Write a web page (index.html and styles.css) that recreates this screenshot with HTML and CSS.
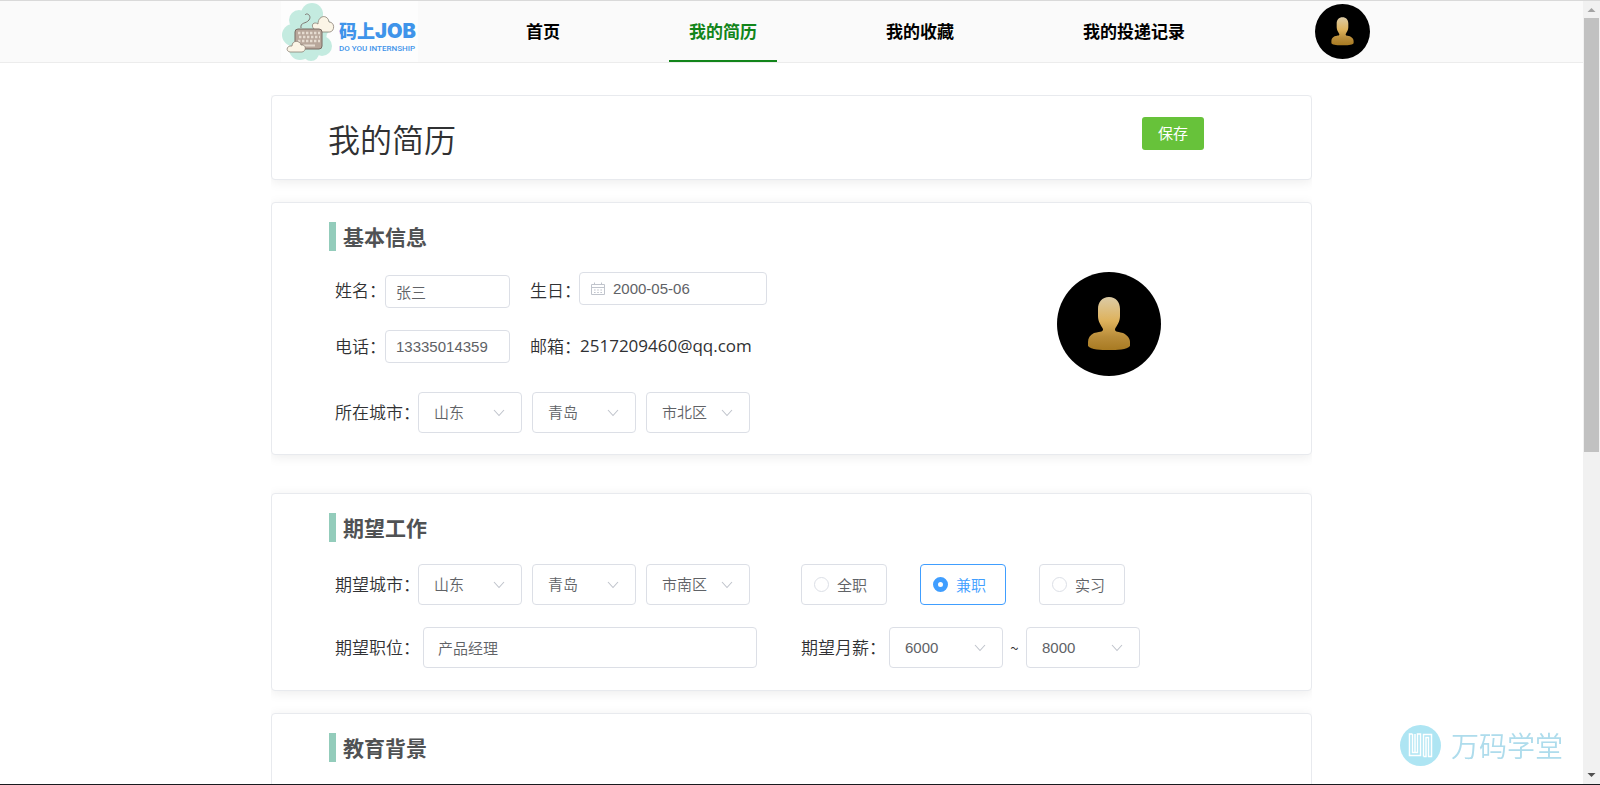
FILE: index.html
```html
<!DOCTYPE html>
<html lang="zh-CN">
<head>
<meta charset="utf-8">
<title>我的简历</title>
<link rel="stylesheet" href="styles.css">
</head>
<body>
<svg class="defs" aria-hidden="true">
  <defs>
    <linearGradient id="gold" x1="0" y1="0" x2="0" y2="1">
      <stop offset="0" stop-color="#dccba6"/>
      <stop offset="0.45" stop-color="#deb25c"/>
      <stop offset="0.75" stop-color="#b98d3a"/>
      <stop offset="1" stop-color="#a87a22"/>
    </linearGradient>
    <symbol id="person" viewBox="0 0 104 104">
      <circle cx="52" cy="52" r="52" fill="#000"/>
      <path fill="url(#gold)" d="M52 25C45 25 41 30 41 37L41 44C41 50 44 53 46 57C46 60 45 59 37 61C33 63 31 66 31 70V74C34 78 44 78 52 78C60 78 70 78 73 74V70C73 66 70 63 66 61C59 59 58 60 58 57C60 53 63 50 63 44L63 37C63 30 59 25 52 25Z"/>
    </symbol>
    <symbol id="chevron" viewBox="0 0 12 8">
      <path d="M1 1L6 6.5L11 1" fill="none" stroke="#c0c4cc" stroke-width="1.1"/>
    </symbol>
  </defs>
</svg>
<div class="window">
  <div class="page">
    <header class="topbar">
      <a class="logo" href="#">
        <svg class="logo-art" viewBox="0 0 56 60" aria-hidden="true">
          <g fill="#c4ebe0">
            <circle cx="31" cy="12" r="11"/><circle cx="18" cy="18" r="10"/><circle cx="12" cy="33" r="11"/>
            <circle cx="19" cy="47" r="11"/><circle cx="30" cy="51" r="8"/><circle cx="41" cy="44" r="10"/><circle cx="40" cy="24" r="10"/><circle cx="28" cy="30" r="18"/>
          </g>
          <path d="M20 26C19 20 25 22 28 18C31 14 26 10 24 13" fill="none" stroke="#7d7570" stroke-width="1"/>
          <path d="M33 27C29 23 33 19 37 22C37 13 47 12 48 20C54 20 54 29 49 30H36Z" fill="#fbf5e6" stroke="#8b8075" stroke-width=".8"/>
          <rect x="14" y="27" width="27" height="20" rx="3" fill="#b8a79b" stroke="#796b62" stroke-width="1"/>
          <g stroke="#e5dbd0" stroke-width="2.4" stroke-dasharray="2.4 1.6">
            <path d="M17 31H39"/><path d="M18 35H39"/><path d="M17 39H39"/>
          </g>
          <path d="M22 43.500H34" stroke="#e5dbd0" stroke-width="2"/>
          <path d="M9 50C4 49 6 43 11 44C11 38 19 38 20 43C25 42 26 49 21 50Z" fill="#fbf5e6" stroke="#8b8075" stroke-width=".8"/>
        </svg>
        <span class="logo-words">
          <span class="logo-name">码上<span class="logo-latin">JOB</span></span>
          <span class="logo-tag">DO YOU INTERNSHIP</span>
        </span>
      </a>
      <nav class="nav">
        <a href="#">首页</a>
        <a href="#" class="active" aria-current="page">我的简历</a>
        <a href="#">我的收藏</a>
        <a href="#">我的投递记录</a>
      </nav>
      <a class="user" href="#" aria-label="用户"><svg><use href="#person"/></svg></a>
    </header>

    <main class="content">
      <div class="cards">
        <section class="card card-head">
          <h1>我的简历</h1>
          <button type="button" class="save">保存</button>
        </section>

        <section class="card">
          <h2>基本信息</h2>
          <div class="basic">
            <div class="fields">
              <div class="row row-name">
                <label for="name">姓名：</label>
                <input id="name" class="box small" type="text" value="张三">
                <label class="second" for="birth">生日：</label>
                <span class="date">
                  <svg viewBox="0 0 14 14" aria-hidden="true"><g fill="none" stroke="#c0c4cc"><path d="M.5 2.500H13.500V12.500H.5Z"/><path d="M.5 5.500H13.500"/><path d="M3.500 .5V3M10.500 .5V3"/><path d="M3 8H11M3 10.500H11" stroke-dasharray="1.600 1.600"/></g></svg>
                  <input id="birth" class="box small" type="text" value="2000-05-06">
                </span>
              </div>
              <div class="row row-phone">
                <label for="phone">电话：</label>
                <input id="phone" class="box small" type="text" value="13335014359">
                <span class="second">邮箱：</span>
                <span class="email">2517209460@qq.com</span>
              </div>
              <div class="row">
                <label class="wide" for="province">所在城市：</label>
                <div class="selects">
                  <span class="pick"><select id="province"><option>山东</option></select><svg><use href="#chevron"/></svg></span>
                  <span class="pick"><select aria-label="城市"><option>青岛</option></select><svg><use href="#chevron"/></svg></span>
                  <span class="pick"><select aria-label="区县"><option>市北区</option></select><svg><use href="#chevron"/></svg></span>
                </div>
              </div>
            </div>
            <svg class="portrait" role="img" aria-label="头像"><use href="#person"/></svg>
          </div>
        </section>

        <section class="card card-job">
          <h2>期望工作</h2>
          <div class="job">
            <div class="row">
              <label class="wide" for="want-province">期望城市：</label>
              <div class="selects">
                <span class="pick"><select id="want-province"><option>山东</option></select><svg><use href="#chevron"/></svg></span>
                <span class="pick"><select aria-label="期望市"><option>青岛</option></select><svg><use href="#chevron"/></svg></span>
                <span class="pick"><select aria-label="期望区县"><option>市南区</option></select><svg><use href="#chevron"/></svg></span>
              </div>
            </div>
            <div class="row kinds">
              <label class="kind"><input type="radio" name="kind">全职</label>
              <label class="kind"><input type="radio" name="kind" checked>兼职</label>
              <label class="kind"><input type="radio" name="kind">实习</label>
            </div>
            <div class="row">
              <label class="position" for="position">期望职位：</label>
              <input id="position" class="box large" type="text" value="产品经理">
            </div>
            <div class="row">
              <label class="position" for="low">期望月薪：</label>
              <span class="pick pay"><select id="low"><option>6000</option></select><svg><use href="#chevron"/></svg></span>
              <span class="tilde">~</span>
              <span class="pick pay"><select aria-label="最高月薪"><option>8000</option></select><svg><use href="#chevron"/></svg></span>
            </div>
          </div>
        </section>

        <section class="card card-edu">
          <h2>教育背景</h2>
        </section>
      </div>
    </main>
  </div>

  <div class="scroll" aria-hidden="true">
    <svg viewBox="0 0 17 17"><path d="M4.500 11L8.500 7L12.500 11Z" fill="#a3a3a3"/></svg>
    <div class="track"><div class="thumb"></div></div>
    <svg viewBox="0 0 17 17"><path d="M4.500 6L8.500 10L12.500 6Z" fill="#505050"/></svg>
  </div>
</div>

<div class="watermark">
  <svg viewBox="0 0 41 41" aria-hidden="true">
    <circle cx="20.500" cy="20.500" r="20.500" fill="#aee5f3"/>
    <g fill="none" stroke="#fff" stroke-width="1.500"><path d="M12.500 9H9.500V30.500H20.500V9H17.500V27.500H12.500V9M15 9V27"/><path d="M23.500 31.500V9.500H31.500V31.500H28.500V12.500H26V31.500H23.500"/></g>
  </svg>
  <span>万码学堂</span>
</div>
</body>
</html>
```
FILE: styles.css
```css
* { box-sizing: border-box; }

body {
  margin: 0;
  font-family: "Noto Sans CJK SC", sans-serif;
  font-size: 17px;
  font-weight: 350;
  color: #303133;
  background: #fff;
}

.defs { position: absolute; width: 0; height: 0; }

.window {
  display: grid;
  grid-template-columns: minmax(0, 1fr) 17px;
  height: 100vh;
  overflow: hidden;
  border-top: 1px solid #d9d9d9;
  border-bottom: 1px solid #1a1a1f;
}

.page { overflow: hidden; }

/* header */
.topbar {
  display: flex;
  align-items: stretch;
  height: 62px;
  padding-left: 281px;
  background: #fafafa;
  border-bottom: 1px solid #ececec;
}

.logo {
  display: flex;
  align-items: center;
  width: 137px;
  margin-right: 88px;
  background: #fdfdfd;
  color: #3f94ea;
  text-decoration: none;
}
.logo-art { width: 56px; height: 60px; flex: none; }
.logo-words { display: flex; flex-direction: column; padding: 7px 0 0 2px; }
.logo-name { font-size: 18px; line-height: 26px; font-weight: 900; white-space: nowrap; }
.logo-latin { font-family: Inter, sans-serif; font-size: 20px; }
.logo-tag {
  font-family: Roboto, sans-serif;
  font-size: 8px;
  line-height: 10px;
  font-weight: 500;
  white-space: nowrap;
}

.nav { display: flex; gap: 89px; }
.nav a {
  padding: 0 20px;
  line-height: 59px;
  font-weight: 700;
  color: #000;
  text-decoration: none;
  white-space: nowrap;
  border-bottom: 2px solid transparent;
}
.nav .active { color: #12851a; border-bottom-color: #12851a; }

.user { align-self: center; margin-left: 110px; height: 55px; }
.user svg { display: block; width: 55px; height: 55px; }

/* cards */
.content { padding: 32px 271px 0; }
.cards { overflow: hidden; padding-bottom: 40px; }
.card {
  margin-bottom: 22px;
  padding: 19px 150px 21px 57px;
  background: #fff;
  border: 1px solid #e8eaee;
  border-radius: 4px;
  box-shadow: 0 2px 12px rgba(0, 0, 0, .08);
}
.card-head {
  display: flex;
  justify-content: space-between;
  align-items: flex-start;
  padding: 21px 107px 19px 56px;
}
.card-job { margin-top: 38px; }
.card-edu { min-height: 198px; }

h1 { margin: 0; font-size: 32px; line-height: 43px; font-weight: 350; }
h2 {
  margin: 0 0 21px;
  padding: 2px 0 2px 7px;
  border-left: 7px solid #93ccbb;
  font-size: 21px;
  line-height: 25px;
  font-weight: 700;
  color: #505254;
}

.save {
  width: 62px;
  height: 33px;
  padding: 0 0 3px;
  border: 0;
  border-radius: 3px;
  background: #67c23a;
  color: #fff;
  font: 400 15px "Noto Sans CJK SC", sans-serif;
}

/* form rows */
.basic { display: flex; justify-content: space-between; align-items: flex-start; }
.portrait { width: 104px; height: 104px; }
.fields { padding-left: 6px; }
.row { display: flex; align-items: center; white-space: nowrap; }
.row-name { height: 36px; margin-bottom: 22px; }
.row-name > .small { align-self: flex-end; }
.row-name .date { align-self: flex-start; }
.row-phone { margin-bottom: 29px; }
.row label, .second { flex: none; width: 50px; padding-bottom: 2px; }
.row .second { margin-left: 20px; width: 49px; }
.row .wide { width: 83px; }
.row .position { width: 88px; }
.email { font-family: "Open Sans", sans-serif; font-weight: 400; padding: 0 0 2px 1px; }

.box, select {
  border: 1px solid #dcdfe6;
  border-radius: 4px;
  background: #fff;
  color: #606266;
  font: 350 15px "Liberation Sans", "Noto Sans CJK SC", sans-serif;
}
.small { width: 125px; height: 33px; padding: 0 10px; }
.large { width: 334px; height: 41px; padding: 0 14px; }

.date { position: relative; }
.date .box { display: block; width: 188px; padding-left: 33px; }
.date svg { position: absolute; left: 12px; top: 10px; width: 14px; height: 14px; }

.selects { display: flex; gap: 10px; }
.pick { position: relative; width: 104px; height: 41px; }
.pick select { appearance: none; width: 100%; height: 100%; padding: 0 15px; }
.pick svg { position: absolute; right: 17px; top: 17px; width: 12px; height: 8px; pointer-events: none; }
.pay { width: 114px; }
.tilde { width: 23px; text-align: center; font-size: 15px; font-weight: 400; }

.job {
  display: grid;
  grid-template-columns: 466px auto;
  row-gap: 22px;
  padding: 1px 0 1px 6px;
}

.kinds { gap: 33px; }
.row .kind {
  display: flex;
  align-items: center;
  gap: 8px;
  width: 86px;
  height: 41px;
  padding: 0 0 0 12px;
  border: 1px solid #dcdfe6;
  border-radius: 4px;
  font-size: 15px;
  color: #606266;
}
.kind input {
  appearance: none;
  width: 15px;
  height: 15px;
  margin: 0;
  border: 1px solid #dcdfe6;
  border-radius: 50%;
  background: #fff;
}
.kind input:checked { border: 5px solid #409eff; }
.row .kind:has(:checked) { border-color: #409eff; color: #409eff; }

/* scrollbar */
.scroll { display: flex; flex-direction: column; background: #f1f1f1; }
.scroll svg { flex: none; width: 17px; height: 17px; }
.track { flex: 1; }
.thumb { width: 15px; height: 58%; margin-left: 1px; background: #c1c1c1; }

.watermark {
  position: fixed;
  right: 37px;
  bottom: 19px;
  display: flex;
  align-items: center;
  gap: 10px;
  color: #aedcec;
  font-size: 28px;
  line-height: 39px;
}
.watermark svg { width: 41px; height: 41px; }
```
